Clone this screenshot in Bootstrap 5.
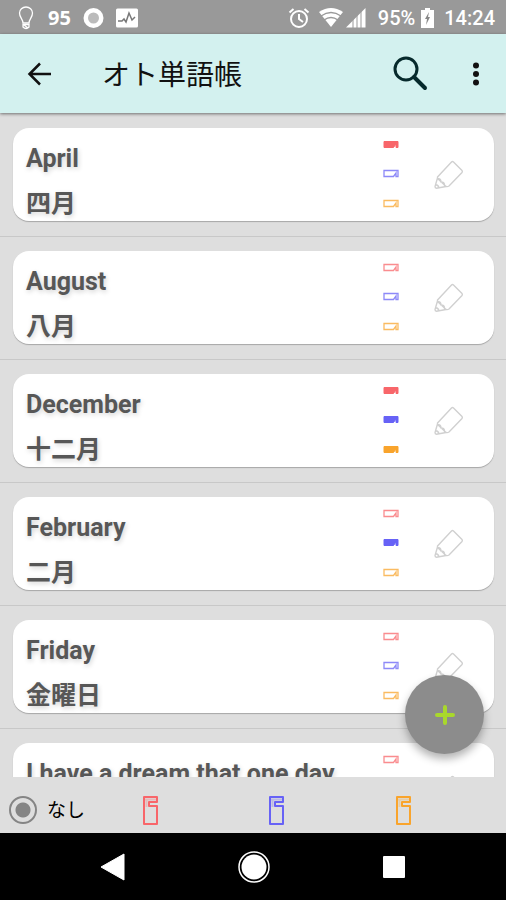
<!DOCTYPE html>
<html lang="ja">
<head>
<meta charset="utf-8">
<meta name="viewport" content="width=device-width, initial-scale=1">
<title>オト単語帳</title>
<link rel="stylesheet" href="https://cdn.jsdelivr.net/npm/bootstrap@5.3.0/dist/css/bootstrap.min.css">
<style>
body { font-family: Roboto, "Noto Sans CJK JP", sans-serif; background: #dedede; }
button { color: inherit; }
svg { display: block; flex: none; }
.status { background: #999; color: #fff; height: 34px; font-size: 20px; font-weight: 500; padding: 2px 11px 0 16px; }
.status .temp { font-family: "Noto Sans", sans-serif; font-weight: 700; }
.appbar { background: #d3f1ef; height: 79px; padding: 0 19px 0 24px; box-shadow: 0 1px 3px rgba(0,0,0,.5); z-index: 1; color: #111; }
.appbar h1 { font-size: 28px; line-height: 40px; margin-left: 46px; padding-top: 5px; }
.search { margin-right: 41px; }
.plain { border: 0; background: none; padding: 0; }
.words { min-height: 0; scrollbar-width: none; }
.words::-webkit-scrollbar { display: none; }
.entry { padding: 14px 12px 15px 13px; border-bottom: 1px solid #c8c8c8; }
#list { padding-top: 1px; }
.tile { background: #fff; border-radius: 16px; height: 93px; padding: 0 30px 0 13px; box-shadow: 0 1px 1px rgba(0,0,0,.25); }
.term { color: #575757; font-size: 25px; line-height: 45px; font-weight: 700; text-shadow: 1px 2px 5px rgba(0,0,0,.18); padding-top: 8px; }
.marks { height: 68px; margin: 0 35px 2px 0; }
.red { color: #f8666a; }
.blue { color: #6762f6; }
.orange { color: #f9a42c; }
.marks svg { fill: none; stroke: currentColor; stroke-width: 1.3; opacity: .75; }
.marks [aria-pressed="true"] svg { fill: currentColor; stroke-width: 1; opacity: 1; }
.add { position: absolute; right: 22px; bottom: 23px; width: 79px; height: 79px; background: #8c8c8c; box-shadow: 0 5px 9px rgba(0,0,0,.3); }
.filters { height: 56px; padding-top: 10px; }
.filters label { cursor: pointer; }
.filters .none-label { font-size: 19px; line-height: 28px; color: #000; margin-left: 10px; padding-top: 2px; }
.dot { appearance: none; width: 28px; height: 28px; margin: 0 0 0 9px; border: 2px solid #858585; border-radius: 50%; flex: none; }
.dot:checked { background: radial-gradient(circle, #858585 7px, transparent 8px); }
.tag { padding-left: 15px; }
.sysnav { height: 67px; background: #000; padding: 0 98px 0 99px; }
</style>
<script src="https://cdn.jsdelivr.net/npm/bootstrap@5.3.0/dist/js/bootstrap.bundle.min.js"></script>
</head>
<body class="vh-100 d-flex flex-column overflow-hidden">
<svg class="d-none" aria-hidden="true">
  <symbol id="mark" viewBox="0 0 16 9"><path d="M1 1.500H15V7.500H13V4L10.500 7.500H1Z"/></symbol>
  <symbol id="pencil" viewBox="0 0 30 30"><path d="M3.500 17 L17.500 2 Q18.500 1 19.500 2 L28 10.500 Q28.800 11.500 28 12.500 L15 26 Q13.500 27 12 26.500 L3.500 18.500Z M3.500 18 L1 26.500 Q1 28 2.500 28.200 L12 26.500 M3.500 19 Q7 18 7 22 Q11 22 10.500 26 M1.500 24.500 Q4.500 25 5 28" fill="none" stroke="#d0d0d0" stroke-width="1.400"/></symbol>
  <symbol id="tag" viewBox="0 0 17 31"><path d="M2 2H15V7H7V11H15V29H2Z" fill="none" stroke="currentColor" stroke-width="2" stroke-linejoin="round"/><path d="M3 4.500H14M4.500 4V12" fill="none" stroke="currentColor" stroke-width="2" opacity=".3"/></symbol>
</svg>

<div class="status d-flex align-items-center flex-shrink-0">
  <svg width="20" height="24" viewBox="0 0 20 24" fill="none" stroke="#fff" stroke-width="1.300"><path d="M7 17C7 13 3.500 11.500 3.500 7A6.500 6 0 0 1 16.500 7C16.500 11.500 13 13 13 17Z"/><path d="M7 18.500h6v2.500q-3 3-6 0zM8 19l4 3"/></svg>
  <span class="temp ms-2 ps-1">95</span>
  <svg class="ms-2" width="26" height="22" viewBox="0 0 26 22"><circle cx="14.500" cy="11" r="10" fill="#fff"/><circle cx="14.500" cy="11" r="5.500" fill="#bbb"/></svg>
  <svg class="ms-2" width="27" height="22" viewBox="0 0 27 22"><rect x="3" y="1.500" width="22" height="19" rx="1.500" fill="#fff"/><path d="M5 14h4l2-2 2 3 3-9 3 7 3-3" fill="none" stroke="#777" stroke-width="1.500"/></svg>
  <svg class="ms-auto" width="22" height="22" viewBox="0 0 22 22" fill="none" stroke="#fff" stroke-width="2"><circle cx="11" cy="12" r="8"/><path d="M11 7v5l4 3M1.500 5.500l4-3.500M20.500 5.500l-4-3.500"/></svg>
  <svg class="ms-2" width="26" height="22" viewBox="0 0 26 22"><path d="M1 5Q13-3 25 5L13 20Z" fill="#fff"/><path d="M3 9q10-7 20 0M6 13q7-5 14 0" fill="none" stroke="#999" stroke-width="1.300"/></svg>
  <svg width="22" height="20" viewBox="0 0 22 20"><path d="M2 19.500 21.500 0V19.500Z" fill="#fff"/><path d="M9 10v10M13 6v14M17 3v17" stroke="#999" stroke-width="1"/></svg>
  <span class="ms-2 ps-1">95%</span>
  <svg class="ms-1" width="17" height="22" viewBox="0 0 17 22"><path d="M2 3h4V1h5v2h4v18H2Z" fill="#fff"/><path d="M10 5 6 12h2l-1 6 4-8H9Z" fill="#888"/></svg>
  <span class="ms-2">14:24</span>
</div>

<header class="appbar d-flex align-items-center flex-shrink-0 position-relative">
  <button class="plain" aria-label="戻る"><svg width="32" height="32" viewBox="0 0 32 32" fill="none" stroke="currentColor" stroke-width="2.500"><path d="M27 16H6M16 5.500 5.500 16 16 26.500"/></svg></button>
  <h1 class="fw-normal mb-0">オト単語帳</h1>
  <button class="plain search ms-auto" aria-label="検索"><svg width="36" height="36" viewBox="0 0 36 36" fill="none" stroke="#062a2c"><circle cx="14" cy="13" r="11" stroke-width="3"/><path d="M22 21 33 32" stroke-width="4" stroke-linecap="round"/></svg></button>
  <button class="plain" aria-label="メニュー"><svg class="me-1" width="14" height="26" viewBox="0 0 14 26" fill="currentColor"><circle cx="7" cy="4.500" r="3"/><circle cx="7" cy="13" r="3"/><circle cx="7" cy="21.500" r="3"/></svg></button>
</header>

<main class="flex-grow-1 position-relative d-flex flex-column words">
  <div id="list" class="words overflow-auto"></div>
  <button class="add btn rounded-circle d-flex align-items-center justify-content-center p-0" aria-label="追加"><svg width="20" height="20" viewBox="0 0 20 20"><path d="M10 2v16M2 10h16" stroke="#a9d82c" stroke-width="4" stroke-linecap="round"/></svg></button>
</main>

<form class="filters row g-0 flex-shrink-0">
  <div class="col-3 d-flex align-items-center"><input class="dot" type="radio" name="filter" id="f0" checked><label class="none-label" for="f0">なし</label></div>
  <div class="col-3 tag d-flex align-items-center"><input class="btn-check" type="radio" name="filter" id="f1"><label class="red" for="f1" aria-label="赤"><svg width="17" height="31"><use href="#tag"/></svg></label></div>
  <div class="col-3 tag d-flex align-items-center"><input class="btn-check" type="radio" name="filter" id="f2"><label class="blue" for="f2" aria-label="青"><svg width="17" height="31"><use href="#tag"/></svg></label></div>
  <div class="col-3 tag d-flex align-items-center"><input class="btn-check" type="radio" name="filter" id="f3"><label class="orange" for="f3" aria-label="橙"><svg width="17" height="31"><use href="#tag"/></svg></label></div>
</form>

<nav class="sysnav d-flex align-items-center flex-shrink-0">
  <button class="plain" aria-label="Back"><svg width="28" height="30" viewBox="0 0 28 30"><path d="M2 15 25 2V28Z" fill="#fff" stroke="#fff" stroke-linejoin="round"/></svg></button>
  <button class="plain mx-auto" aria-label="Home"><svg width="34" height="34" viewBox="0 0 34 34"><circle cx="17" cy="17" r="15" fill="none" stroke="#fff" stroke-width="1.500"/><circle cx="17" cy="17" r="12.500" fill="#fff"/></svg></button>
  <button class="plain" aria-label="Recent"><svg width="28" height="30" viewBox="0 0 28 30"><rect x="3" y="4" width="22" height="22" rx="1" fill="#fff"/></svg></button>
</nav>

<script>
const colors = [["red", "赤"], ["blue", "青"], ["orange", "橙"]];
const words = [
  ["April", "四月", [1, 0, 0]],
  ["August", "八月", [0, 0, 0]],
  ["December", "十二月", [1, 1, 1]],
  ["February", "二月", [0, 1, 0]],
  ["Friday", "金曜日", [0, 0, 0]],
  ["I have a dream that one day", "", [0, 0, 0]]
];
document.getElementById("list").innerHTML = words.map(([en, ja, on]) => `
  <div class="entry"><div class="tile d-flex align-items-center overflow-hidden">
    <div class="term flex-grow-1 align-self-start text-nowrap"><div>${en}</div><div>${ja}</div></div>
    <div class="marks d-flex flex-column justify-content-between">
      ${colors.map(([c, name], i) => `<button class="plain ${c}" aria-label="${name}" aria-pressed="${!!on[i]}"><svg width="16" height="9"><use href="#mark"/></svg></button>`).join("")}
    </div>
    <button class="plain" aria-label="編集"><svg width="30" height="30"><use href="#pencil"/></svg></button>
  </div></div>`).join("");
</script>
</body>
</html>
